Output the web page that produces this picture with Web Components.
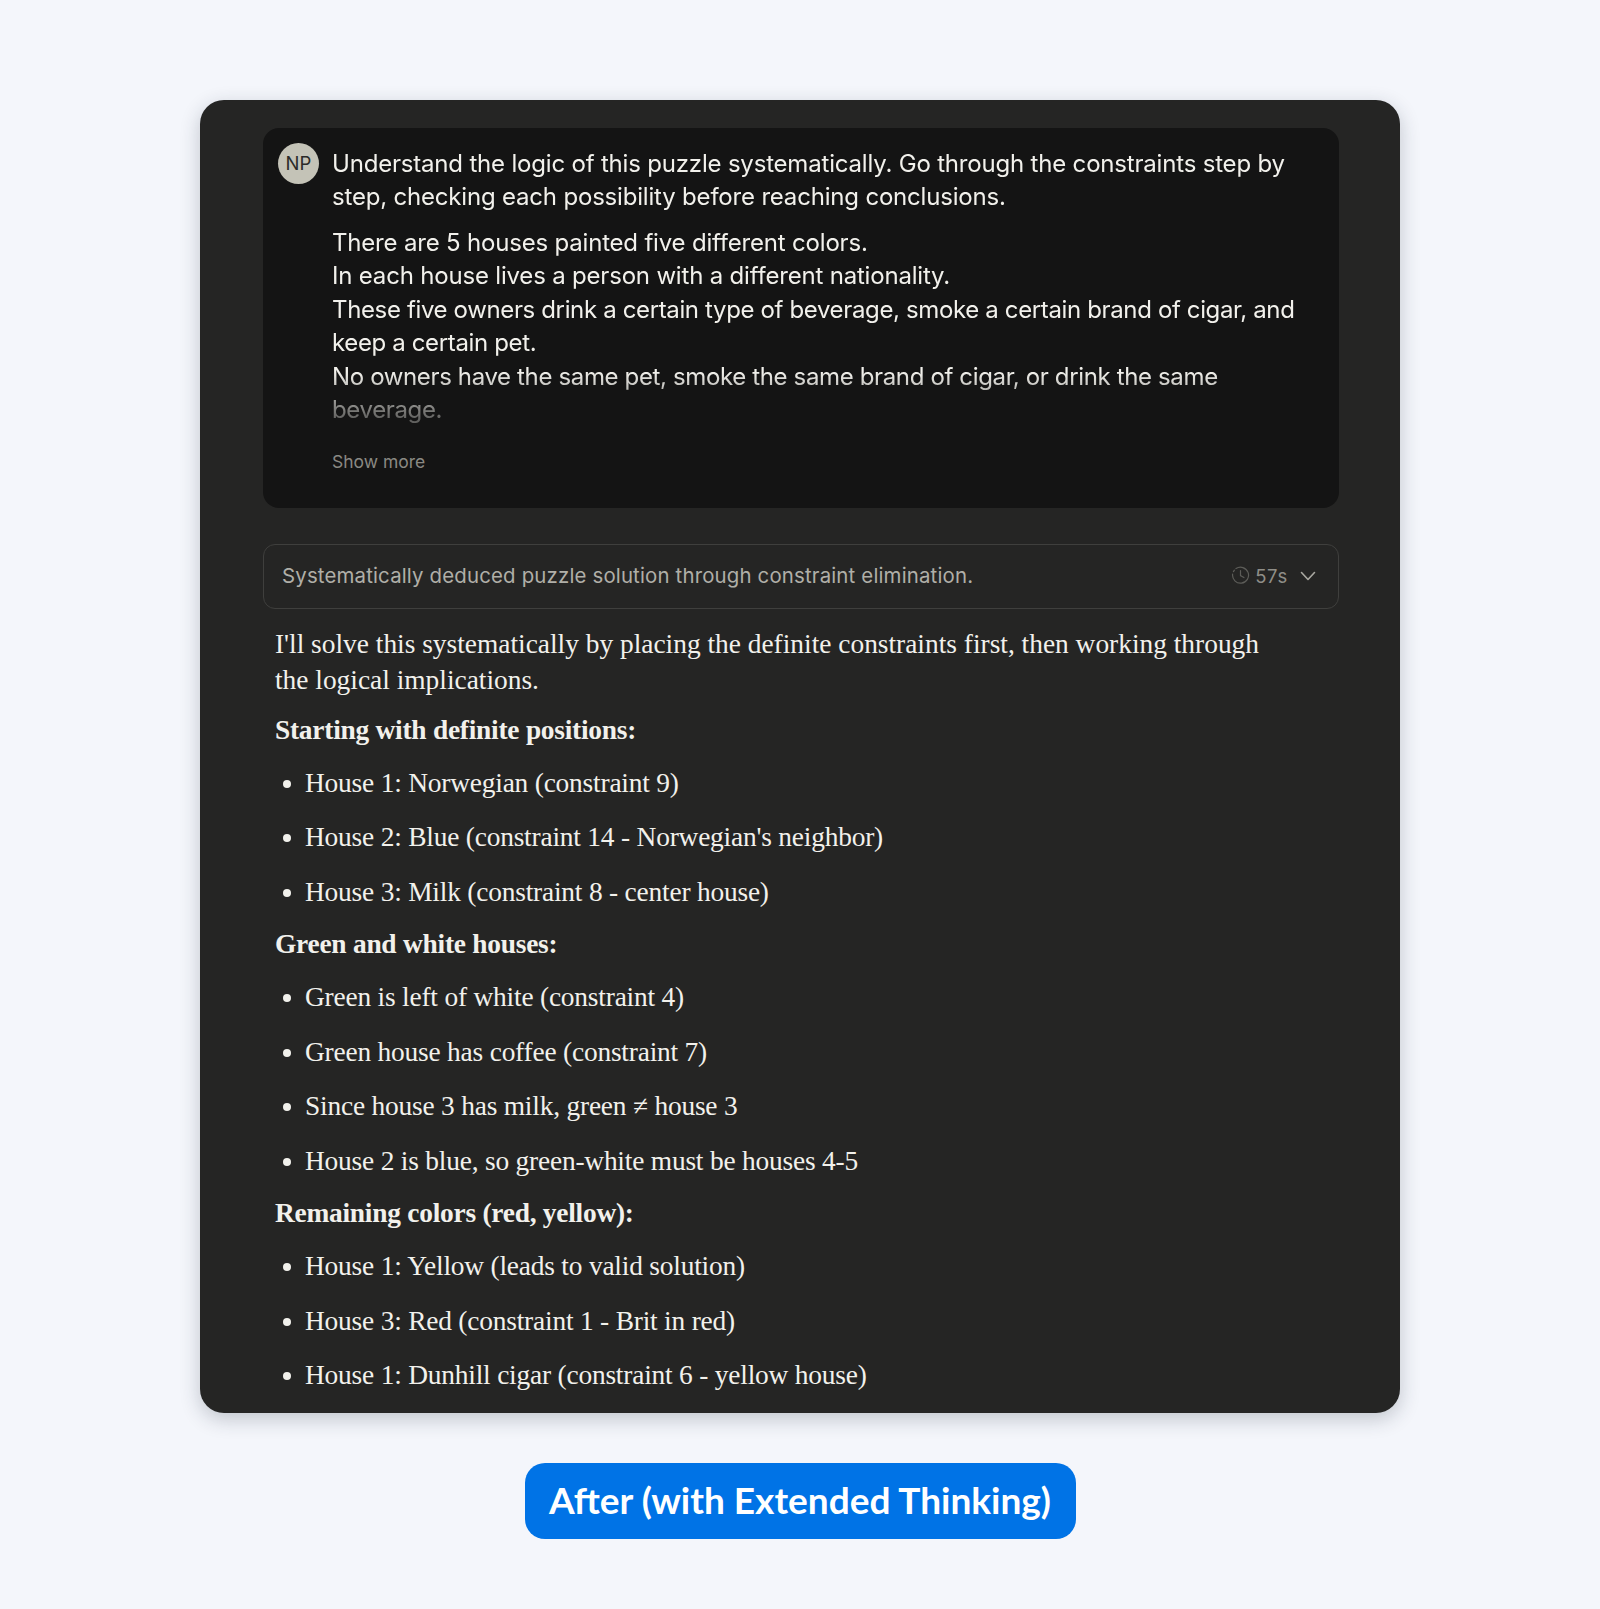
<!DOCTYPE html>
<html lang="en">
<head>
<meta charset="utf-8">
<title>After (with Extended Thinking)</title>
<style>
  html, body { margin: 0; background: #f4f6fb; }
  body { height: 1609px; overflow: hidden; }
  demo-page { --sans: Inter, "Liberation Sans", sans-serif; --serif: "Liberation Serif", serif; }
</style>
</head>
<body>
<demo-page>
  <chat-card>
    <user-message initials="NP">
      <msg-line gap>Understand the logic of this puzzle systematically. Go through the constraints step by step, checking each possibility before reaching conclusions.</msg-line>
      <msg-line>There are 5 houses painted five different colors.</msg-line>
      <msg-line>In each house lives a person with a different nationality.</msg-line>
      <msg-line tight>These five owners drink a certain type of beverage, smoke a certain brand of cigar, and keep a certain pet.</msg-line>
      <msg-line tight>No owners have the same pet, smoke the same brand of cigar, or drink the same beverage.</msg-line>
    </user-message>
    <thinking-summary time="57s">Systematically deduced puzzle solution through constraint elimination.</thinking-summary>
    <reply-text>I'll solve this systematically by placing the definite constraints first, then working through the logical implications.</reply-text>
    <reply-heading>Starting with definite positions:</reply-heading>
    <reply-item>House 1: Norwegian (constraint 9)</reply-item>
    <reply-item>House 2: Blue (constraint 14 - Norwegian's neighbor)</reply-item>
    <reply-item>House 3: Milk (constraint 8 - center house)</reply-item>
    <reply-heading>Green and white houses:</reply-heading>
    <reply-item>Green is left of white (constraint 4)</reply-item>
    <reply-item>Green house has coffee (constraint 7)</reply-item>
    <reply-item>Since house 3 has milk, green ≠ house 3</reply-item>
    <reply-item>House 2 is blue, so green-white must be houses 4-5</reply-item>
    <reply-heading>Remaining colors (red, yellow):</reply-heading>
    <reply-item>House 1: Yellow (leads to valid solution)</reply-item>
    <reply-item>House 3: Red (constraint 1 - Brit in red)</reply-item>
    <reply-item>House 1: Dunhill cigar (constraint 6 - yellow house)</reply-item>
  </chat-card>
  <status-badge>After (with Extended Thinking)</status-badge>
</demo-page>

<script>
function define(name, css, html, setup) {
  const template = document.createElement("template");
  template.innerHTML = `<style>${css}</style>${html}`;
  customElements.define(name, class extends HTMLElement {
    connectedCallback() {
      if (this.shadowRoot) return;
      const root = this.attachShadow({ mode: "open" });
      root.appendChild(template.content.cloneNode(true));
      if (setup) setup(this, root);
    }
  });
}

define("demo-page", `
  :host { display: flex; flex-direction: column; align-items: center; padding-top: 100px; }
`, `<slot></slot>`);

define("chat-card", `
  :host {
    display: block; box-sizing: border-box; width: 1200px; height: 1313px;
    padding: 28px 61px 0 63px; background: #252524; border-radius: 24px;
    box-shadow: 0 6px 20px rgba(30, 40, 60, .24); overflow: hidden;
  }
`, `<slot></slot>`);

define("user-message", `
  :host {
    display: grid; grid-template-columns: 41px 1fr; grid-template-rows: auto 1fr; column-gap: 13px; box-sizing: border-box;
    height: 380px; padding: 15px 40px 0 15px; background: #141414; border-radius: 16px;
    font: 400 24px/33.5px var(--sans); letter-spacing: -.19px; color: #f2f1ec;
  }
  .avatar {
    width: 41px; height: 41px; border-radius: 50%; background: #c4c3b7; color: #2b2b29;
    display: flex; align-items: center; justify-content: center; font-size: 18.5px; line-height: 1; letter-spacing: 0;
  }
  .text {
    height: 282px; overflow: hidden; margin-top: 3.8px;
    -webkit-mask-image: linear-gradient(#000 225px, rgba(0,0,0,.35) 272px);
    mask-image: linear-gradient(#000 225px, rgba(0,0,0,.35) 272px);
  }
  .more { grid-column: 2; margin-top: 21.5px; font-size: 17.5px; line-height: 24px; letter-spacing: 0; color: #8a8983; }
`, `
  <div class="avatar"></div>
  <div class="text"><slot></slot></div>
  <div class="more">Show more</div>
`, (el, root) => { root.querySelector(".avatar").textContent = el.getAttribute("initials"); });

define("msg-line", `
  :host { display: block; }
  :host([gap]) { margin-bottom: 12px; }
  :host([tight]) { letter-spacing: -.36px; }
`, `<slot></slot>`);

define("thinking-summary", `
  :host {
    display: flex; align-items: center; box-sizing: border-box; height: 65px; margin-top: 36px;
    padding: 0 21px 2px 18px; border: 1px solid #3f3f3d; border-radius: 12px;
    font: 400 20.4px/28px var(--sans); letter-spacing: .17px; color: #b0afa8;
  }
  .label { flex: 1; }
  .time { display: flex; align-items: center; gap: 5px; font-size: 18.5px; letter-spacing: .7px; color: #8f8e88; }
  svg { display: block; flex: none; }
  .chev { margin-left: 11px; }
`, `
  <div class="label"><slot></slot></div>
  <div class="time">
    <svg width="19" height="19" viewBox="0 0 19 19" fill="none" stroke="#5d5d59" stroke-width="1.2" stroke-linecap="round">
      <path d="M5 2.6A8 8 0 1 1 1.6 8.2" /><path d="M2.4 5.6 3.4 4.2" /><path d="M9.5 4.6v5l3.4 2" />
    </svg>
    <span class="value"></span>
  </div>
  <svg class="chev" width="18" height="18" viewBox="0 0 18 18" fill="none" stroke="#a9a8a1" stroke-width="1.6" stroke-linecap="round" stroke-linejoin="round">
    <path d="M2.5 5.5 9 12.5 15.5 5.5" />
  </svg>
`, (el, root) => { root.querySelector(".value").textContent = el.getAttribute("time"); });

define("reply-text", `
  :host {
    display: block; margin: 17px 65px 13.6px 12px;
    font: 400 27.4px/36px var(--serif); color: #f2f1ec;
  }
`, `<slot></slot>`);

define("reply-heading", `
  :host {
    display: block; margin: 7px 0 8px 12px;
    font: 700 27.4px/36px var(--serif); letter-spacing: -.24px; color: #f2f1ec;
  }
`, `<slot></slot>`);

define("reply-item", `
  :host {
    display: flex; align-items: center; margin: 0 0 0 12px; height: 54.5px;
    font: 400 27.4px/36px var(--serif); letter-spacing: -.2px; color: #f2f1ec;
  }
  .dot { flex: none; width: 8px; height: 8px; margin: 2px 14px 0 8px; border-radius: 50%; background: #f2f1ec; }
`, `<span class="dot"></span><span><slot></slot></span>`);

define("status-badge", `
  :host {
    display: flex; align-items: center; justify-content: center; box-sizing: border-box;
    width: 551px; height: 76px; margin-top: 50px; padding-bottom: 3px; background: #0073e6; border-radius: 20px;
    font: 700 37px/1 Lato, var(--sans); color: #fff; white-space: nowrap;
  }
`, `<slot></slot>`);
</script>
</body>
</html>
